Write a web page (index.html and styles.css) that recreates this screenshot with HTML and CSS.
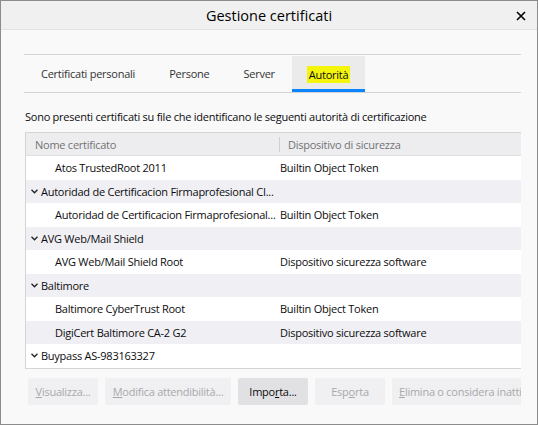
FILE: index.html
```html
<!DOCTYPE html>
<html lang="it">
<head>
    <meta charset="UTF-8">
    <title>Gestione certificati</title>
    <link rel="stylesheet" href="styles.css">
</head>
<body>

    <div class="dialog">
        <div class="titlebar">
            <span class="title">Gestione certificati</span>
            <svg class="close" width="10" height="10" viewBox="0 0 10 10">
                <path d="M1 1 L9 9 M9 1 L1 9" stroke="#000" stroke-width="1.6" fill="none"/>
            </svg>
        </div>

        <div class="content">
            <div class="tabs">
                <div class="tab">Certificati personali</div>
                <div class="tab">Persone</div>
                <div class="tab">Server</div>
                <div class="tab selected"><span class="marker">Autorità</span></div>
            </div>

            <p class="intro">Sono presenti certificati su file che identificano le seguenti autorità di certificazione</p>

            <div class="tree">
                <div class="row head">
                    <div class="col name">Nome certificato</div>
                    <div class="col device">Dispositivo di sicurezza</div>
                </div>
                <div class="row">
                    <div class="col name child">Atos TrustedRoot 2011</div>
                    <div class="col device">Builtin Object Token</div>
                </div>
                <div class="row group">
                    <div class="col name"><svg class="twisty" width="7" height="5" viewBox="0 0 7 5"><path d="M0.5 0.8 L3.5 3.8 L6.5 0.8" stroke="#222" stroke-width="1.3" fill="none"/></svg><span>Autoridad de Certificacion Firmaprofesional CI...</span></div>
                </div>
                <div class="row">
                    <div class="col name child">Autoridad de Certificacion Firmaprofesional...</div>
                    <div class="col device">Builtin Object Token</div>
                </div>
                <div class="row group">
                    <div class="col name"><svg class="twisty" width="7" height="5" viewBox="0 0 7 5"><path d="M0.5 0.8 L3.5 3.8 L6.5 0.8" stroke="#222" stroke-width="1.3" fill="none"/></svg><span>AVG Web/Mail Shield</span></div>
                </div>
                <div class="row">
                    <div class="col name child">AVG Web/Mail Shield Root</div>
                    <div class="col device">Dispositivo sicurezza software</div>
                </div>
                <div class="row group">
                    <div class="col name"><svg class="twisty" width="7" height="5" viewBox="0 0 7 5"><path d="M0.5 0.8 L3.5 3.8 L6.5 0.8" stroke="#222" stroke-width="1.3" fill="none"/></svg><span>Baltimore</span></div>
                </div>
                <div class="row">
                    <div class="col name child">Baltimore CyberTrust Root</div>
                    <div class="col device">Builtin Object Token</div>
                </div>
                <div class="row">
                    <div class="col name child">DigiCert Baltimore CA-2 G2</div>
                    <div class="col device">Dispositivo sicurezza software</div>
                </div>
                <div class="row group">
                    <div class="col name"><svg class="twisty" width="7" height="5" viewBox="0 0 7 5"><path d="M0.5 0.8 L3.5 3.8 L6.5 0.8" stroke="#222" stroke-width="1.3" fill="none"/></svg><span>Buypass AS-983163327</span></div>
                </div>
            </div>

            <div class="buttons">
                <button class="btn" disabled><u>V</u>isualizza...</button>
                <button class="btn wide" disabled><u>M</u>odifica attendibilità...</button>
                <button class="btn active">Impo<u>r</u>ta...</button>
                <button class="btn" disabled>Esp<u>o</u>rta</button>
                <button class="btn last" disabled><u>E</u>limina o considera inattivo...</button>
            </div>
        </div>
    </div>

</body>
</html>
```

FILE: styles.css
```css
body {
    margin: 0;
    font-family: 'Open Sans', 'Noto Sans', sans-serif;
    font-size: 11px;
    letter-spacing: -0.25px;
    color: #0c0c0d;
    background: #f9f9fa;
}

.dialog {
    width: 538px;
    height: 425px;
    box-sizing: border-box;
    border: 1px solid #8c8c8c;
    background: #f9f9fa;
    overflow: hidden;
}

/* barra del titolo */
.titlebar {
    height: 28px;
    background: #f0f0f0;
    border-bottom: 1px solid #e3e3e3;
    display: flex;
    align-items: center;
    justify-content: center;
    position: relative;
}

.title {
    font-size: 14.5px;
    letter-spacing: 0;
    color: #000;
}

.close {
    position: absolute;
    right: 11px;
    top: 10px;
}

.content {
    padding: 24px 16px 0 23px;
}

/* schede */
.tabs {
    display: flex;
    border-top: 1px solid #d4d4d4;
    border-bottom: 1px solid #d4d4d4;
    height: 37px;
}

.tab {
    display: flex;
    align-items: center;
    padding: 0 17px;
    color: #333;
}

.tab.selected {
    background: #ebebeb;
    margin-top: 1px;
    box-shadow: inset 0 -3px 0 #0a84ff;
    color: #0c0c0d;
}

.marker {
    background: #f5f50a;
    padding: 1px 2px;
    margin: 0 -2px;
}

.intro {
    margin: 16px 0 7px 1px;
    line-height: 16px;
}

/* albero dei certificati */
.tree {
    border: 1px solid #d4d4d4;
    border-right: none;
    background: #fff;
    margin-left: 1px;
}

.row {
    display: flex;
    height: 23.5px;
    align-items: center;
    white-space: nowrap;
}

.row:nth-child(odd) {
    background: #f0f0f4;
}

.row.head {
    height: 22px;
    background: #ededf0;
    border-bottom: 1px solid #e0e0e2;
    color: #737373;
}

.col.name {
    width: 249px;
    padding-left: 5px;
    display: flex;
    align-items: center;
    overflow: hidden;
}

.col.name.child {
    padding-left: 29px;
    width: 225px;
}

.head .col.name {
    height: 15px;
    border-right: 1px solid #cfcfd1;
    padding-left: 9px;
    width: 244px;
}

.head .col.device {
    padding-left: 8px;
}

.twisty {
    flex-shrink: 0;
    margin-right: 3px;
}

/* pulsanti */
.buttons {
    display: flex;
    gap: 7px;
    margin: 9px 0 0 4px;
    overflow: hidden;
}

.btn {
    font-family: inherit;
    font-size: 11px;
    letter-spacing: -0.25px;
    height: 27px;
    min-width: 70px;
    padding: 0 7px;
    border: none;
    border-radius: 2px;
    background: #f0f0f2;
    color: #a8a8aa;
    flex-shrink: 0;
}

.btn.wide {
    min-width: 126px;
}

.btn.active {
    background: #e1e1e3;
    color: #0c0c0d;
}

.btn.last {
    min-width: 140px;
    text-align: left;
}
```
